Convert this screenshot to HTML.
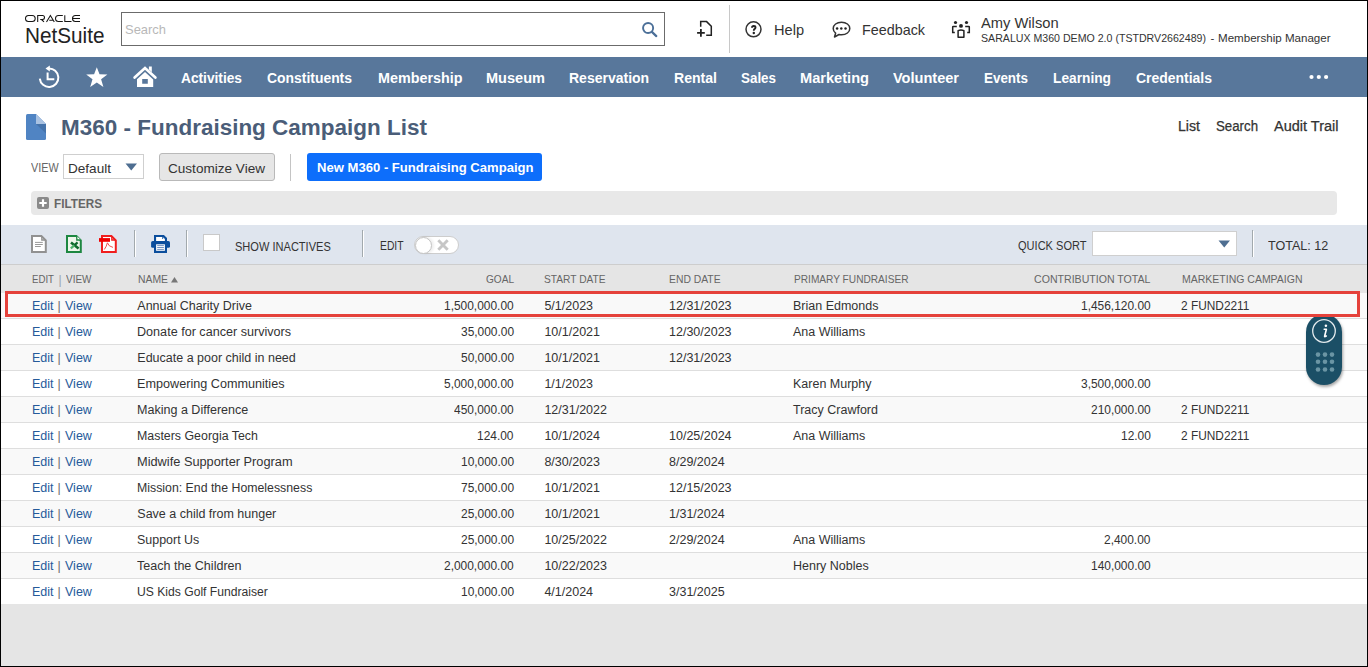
<!DOCTYPE html>
<html><head><meta charset="utf-8">
<style>
*{margin:0;padding:0;box-sizing:border-box}
html,body{width:1368px;height:667px;overflow:hidden;background:#fff}
body{position:relative;font-family:"Liberation Sans",sans-serif}
.t{position:absolute;white-space:pre;line-height:1;font-family:"Liberation Sans",sans-serif}
.b{position:absolute}
svg{position:absolute;overflow:visible}
</style></head><body>
<!-- header -->
<svg style="left:25px;top:15px" width="56" height="8" viewBox="0 0 56 8"><path d="M3.5 0.5 H7.2 A3 3 0 0 1 7.2 6.5 H3.5 A3 3 0 0 1 3.5 0.5 Z M12.7 7 V0.5 H17.5 A2 2 0 0 1 17.5 4.5 H15.2 M16.5 4.5 L19 6.9 M21.5 7 L25.4 0.6 L29.3 7 M24.3 5.3 H28.3 M37.8 0.5 H33.5 A3 3 0 0 0 33.5 6.5 H37.8 M39.8 0.3 V6.5 H46.5 M55 0.5 H50.5 A3 3 0 0 0 50.5 6.5 H55 M48 3.5 H55" fill="none" stroke="#161513" stroke-width="1.05"/></svg>
<div class="b" style="left:121px;top:12px;width:544px;height:34px;border:1px solid #6b6b6b;background:#fff"></div>
<svg style="left:641px;top:23px" width="17" height="15" viewBox="0 0 17 15"><circle cx="7.1" cy="5" r="5.05" fill="none" stroke="#4b6f98" stroke-width="1.9"/><line x1="10.9" y1="8.9" x2="15.3" y2="13.1" stroke="#4b6f98" stroke-width="2.2" stroke-linecap="round"/></svg>
<svg style="left:696px;top:21px" width="17" height="17" viewBox="0 0 17 17"><path d="M4.7 5.8 V0.6 H10.6 L15.3 5.2 V14.3 H10.2" fill="none" stroke="#222" stroke-width="1.5" stroke-linejoin="miter"/><path d="M1.1 11.8 H8.8 M4.9 8.1 V15.7" stroke="#222" stroke-width="1.8"/></svg>
<div class="b" style="left:729px;top:5px;width:1px;height:48px;background:#c8c8c8"></div>
<svg style="left:745px;top:21px" width="18" height="17" viewBox="0 0 18 17"><circle cx="8.5" cy="8.3" r="7.5" fill="none" stroke="#333" stroke-width="1.5"/><path d="M7 6.7 Q7 5 8.8 5 Q10.5 5 10.5 6.5 Q10.5 7.5 9.5 8.1 Q8.8 8.6 8.8 9.7" fill="none" stroke="#222" stroke-width="1.9"/><circle cx="8.8" cy="12" r="1.2" fill="#222"/></svg>
<svg style="left:832px;top:21px" width="19" height="17" viewBox="0 0 19 17"><path d="M9.5 1.2 C14.3 1.2 17.8 3.9 17.8 7.5 C17.8 11.1 14.3 13.8 9.5 13.8 C8.6 13.8 7.8 13.7 7 13.5 L2.5 16 L3.6 12.2 C2 11 1.2 9.4 1.2 7.5 C1.2 3.9 4.7 1.2 9.5 1.2 Z" fill="none" stroke="#333" stroke-width="1.5" stroke-linejoin="round"/><circle cx="5.1" cy="7.6" r="1.25" fill="#222"/><circle cx="9.3" cy="7.6" r="1.25" fill="#222"/><circle cx="13.5" cy="7.6" r="1.25" fill="#222"/></svg>
<svg style="left:945px;top:15px" width="30" height="27" viewBox="0 0 30 27"><g fill="#222"><circle cx="10.5" cy="7.5" r="1.6"/><circle cx="21.5" cy="7.5" r="1.6"/><circle cx="16" cy="10.9" r="1.95"/></g><path d="M11.8 11.6 H8.2 Q7.7 11.6 7.7 12.1 V17.4 H9.8 M20.2 11.6 H23.8 Q24.3 11.6 24.3 12.1 V17.4 H22.2" fill="none" stroke="#222" stroke-width="1.5"/><path d="M13.1 22.2 V15.6 Q16 14.3 18.9 15.6 V22.2 Z" fill="none" stroke="#222" stroke-width="1.5" stroke-linejoin="round"/></svg>

<!-- nav -->
<div class="b" style="left:0;top:57px;width:1368px;height:40px;background:#58779b"></div>
<svg style="left:38px;top:66px" width="22" height="22" viewBox="0 0 22 22"><path d="M1.8 12.6 A9.3 9.3 0 1 0 10.6 2.4" fill="none" stroke="#fff" stroke-width="2"/><path d="M7.5 2.5 L11.8 -0.4 L11.8 5.4 Z" fill="#fff"/><path d="M9.6 6.5 V13.3 H16.3" fill="none" stroke="#fff" stroke-width="2"/></svg>
<svg style="left:86px;top:67px" width="22" height="21" viewBox="0 0 22 21"><path d="M10.8 0.2 L13.5 7.2 L21.4 7.4 L15.1 12.3 L17.4 20 L10.8 15.4 L4.2 20 L6.5 12.3 L0.2 7.4 L8.1 7.2 Z" fill="#fff"/></svg>
<svg style="left:128px;top:62px" width="34" height="30" viewBox="0 0 34 30"><path d="M6.6 15.6 L17 6 L27.4 15.6" fill="none" stroke="#fff" stroke-width="2.7" stroke-linecap="round"/><path d="M20.9 4.5 H23.8 V10.2 L20.9 7.4 Z" fill="#fff"/><path d="M9 25 V17.3 L17 10.1 L25.2 17.5 V25 Z M14.2 16.9 V21.8 H19.8 V16.9 Z" fill="#fff" fill-rule="evenodd"/></svg>
<svg style="left:1309px;top:74px" width="20" height="6" viewBox="0 0 20 6"><circle cx="2.5" cy="3" r="2.1" fill="#fff"/><circle cx="9.8" cy="3" r="2.1" fill="#fff"/><circle cx="17.1" cy="3" r="2.1" fill="#fff"/></svg>

<!-- title area -->
<svg style="left:26px;top:114px" width="20" height="26" viewBox="0 0 20 26"><path d="M1.5 0 H10 L20 10 V24.5 Q20 26 18.5 26 H1.5 Q0 26 0 24.5 V1.5 Q0 0 1.5 0 Z" fill="#5084c3"/><path d="M10 0 L20 10 H10 Z" fill="#a9c2e2"/><path d="M10 10 H20 V19.5 Z" fill="#4573ab"/></svg>

<div class="b" style="left:63px;top:154px;width:81px;height:25px;border:1px solid #cfcfcf;background:#fff"></div>
<svg style="left:125px;top:163px" width="13" height="8" viewBox="0 0 13 8"><path d="M0.5 0.5 H12 L6.25 7.5 Z" fill="#4e6e91"/></svg>
<div class="b" style="left:159px;top:153px;width:116px;height:28px;border:1px solid #b9b9b9;border-radius:3px;background:#e6e6e6"></div>
<div class="b" style="left:290px;top:154px;width:1px;height:27px;background:#c4c4c4"></div>
<div class="b" style="left:307px;top:153px;width:235px;height:28px;border-radius:3px;background:#0d6efb"></div>

<div class="b" style="left:31px;top:191px;width:1306px;height:24px;border-radius:4px;background:#e8e8e8"></div>
<svg style="left:37px;top:197px" width="12" height="12" viewBox="0 0 12 12"><rect x="0" y="0" width="12" height="12" rx="2" fill="#8a8a8a"/><path d="M6 2.3 V9.7 M2.3 6 H9.7" stroke="#fff" stroke-width="2.2"/></svg>

<!-- toolbar -->
<div class="b" style="left:1px;top:225px;width:1366px;height:40px;background:#dfe5ee;border-bottom:1px solid #cdcdcd"></div>
<svg style="left:28px;top:230px" width="92" height="28" viewBox="0 0 92 28">
<path d="M4 6 H13.4 L17.8 10.4 V21.9 H4 Z" fill="#fff" stroke="#919191" stroke-width="2"/><path d="M13.8 6 V10 H17.8" fill="none" stroke="#919191" stroke-width="1.3"/><path d="M7 12.4 H14.8 M7 14.5 H14.8 M7 16.5 H12.8" stroke="#9a9a9a" stroke-width="1"/>
<path d="M39 6 H48.4 L52.8 10.4 V21.9 H39 Z" fill="#eef6ea" stroke="#1d8741" stroke-width="2"/><path d="M48.8 6 V10 H52.8" fill="#fff" stroke="#1d8741" stroke-width="1.3"/><path d="M43 12.4 L50.6 18.4" stroke="#0f6a2c" stroke-width="2.6"/><path d="M49.6 12.4 L46.3 15.4" stroke="#0f6a2c" stroke-width="2.2"/><path d="M46.3 15.4 L42.8 18.4" stroke="#4fb26b" stroke-width="2.2"/>
<path d="M74 6 H83.4 L87.8 10.4 V21.9 H74 Z" fill="#fff" stroke="#f01e1e" stroke-width="2"/><path d="M83.8 6 V10 H87.8" fill="none" stroke="#f01e1e" stroke-width="1.3"/><rect x="71" y="8.1" width="11" height="3.7" fill="#f00000"/><path d="M76.3 19.5 Q78.5 16.5 79.4 12.8 Q80.5 16.5 85 17.4" fill="none" stroke="#f03a3a" stroke-width="0.9"/>
</svg>
<div class="b" style="left:134px;top:230px;width:1px;height:27px;background:#a2a9ad"></div><div class="b" style="left:135px;top:231px;width:1px;height:26px;background:#fff"></div>
<svg style="left:145px;top:230px" width="32" height="28" viewBox="0 0 32 28"><path d="M9 22.9 V5 H18.9 L22 8.1 V22.9 Z" fill="#0b4e9d"/><rect x="6.1" y="11.1" width="18.9" height="6.7" rx="1.6" fill="#0b4e9d"/><path d="M11.1 6.9 H17.3 V9.1 H19.9 V11.1 H11.1 Z" fill="#fff"/><path d="M18.1 7.2 L19.9 9 H18.1 Z" fill="#fff"/><rect x="11.1" y="14.3" width="8.8" height="6.5" fill="#fff"/><path d="M12.2 15.6 H18.9 M12.2 17.5 H18.9 M12.2 19.4 H18.9" stroke="#5f86bb" stroke-width="0.9"/></svg>
<div class="b" style="left:186px;top:230px;width:1px;height:27px;background:#a2a9ad"></div><div class="b" style="left:187px;top:231px;width:1px;height:26px;background:#fff"></div>
<div class="b" style="left:203px;top:234px;width:17px;height:17px;border:1px solid #c9c9c9;background:#fff"></div>
<div class="b" style="left:362px;top:230px;width:1px;height:27px;background:#a2a9ad"></div><div class="b" style="left:363px;top:231px;width:1px;height:26px;background:#fff"></div>
<div class="b" style="left:414px;top:236px;width:45px;height:18px;border:1px solid #cdcdcd;border-radius:9px;background:#fff"></div>
<div class="b" style="left:414.5px;top:236.5px;width:17px;height:17px;border:1px solid #c4c4c4;border-radius:50%;background:#fff;box-shadow:2px 0 3px rgba(0,0,0,.08)"></div>
<svg style="left:436px;top:238px" width="14" height="14" viewBox="0 0 14 14"><path d="M2.3 2.3 L11.7 11.7 M11.7 2.3 L2.3 11.7" stroke="#c6c6c6" stroke-width="2.9"/></svg>
<div class="b" style="left:1092px;top:231px;width:145px;height:25px;border:1px solid #cfcfcf;background:#fff"></div>
<svg style="left:1218px;top:240px" width="13" height="8" viewBox="0 0 13 8"><path d="M0.5 0.5 H12 L6.25 7.5 Z" fill="#4e6e91"/></svg>
<div class="b" style="left:1252px;top:230px;width:1px;height:27px;background:#a2a9ad"></div><div class="b" style="left:1253px;top:231px;width:1px;height:26px;background:#fff"></div>

<!-- table -->
<div class="b" style="left:1px;top:265px;width:1366px;height:28px;background:#e5e5e5"></div>

<div class="b" style="left:1px;top:293px;width:1366px;height:26px;background:#f9f9f9;border-bottom:1px solid #dedede"></div>
<div class="b" style="left:1px;top:319px;width:1366px;height:26px;background:#ffffff;border-bottom:1px solid #dedede"></div>
<div class="b" style="left:1px;top:345px;width:1366px;height:26px;background:#f9f9f9;border-bottom:1px solid #dedede"></div>
<div class="b" style="left:1px;top:371px;width:1366px;height:26px;background:#ffffff;border-bottom:1px solid #dedede"></div>
<div class="b" style="left:1px;top:397px;width:1366px;height:26px;background:#f9f9f9;border-bottom:1px solid #dedede"></div>
<div class="b" style="left:1px;top:423px;width:1366px;height:26px;background:#ffffff;border-bottom:1px solid #dedede"></div>
<div class="b" style="left:1px;top:449px;width:1366px;height:26px;background:#f9f9f9;border-bottom:1px solid #dedede"></div>
<div class="b" style="left:1px;top:475px;width:1366px;height:26px;background:#ffffff;border-bottom:1px solid #dedede"></div>
<div class="b" style="left:1px;top:501px;width:1366px;height:26px;background:#f9f9f9;border-bottom:1px solid #dedede"></div>
<div class="b" style="left:1px;top:527px;width:1366px;height:26px;background:#ffffff;border-bottom:1px solid #dedede"></div>
<div class="b" style="left:1px;top:553px;width:1366px;height:26px;background:#f9f9f9;border-bottom:1px solid #dedede"></div>
<div class="b" style="left:1px;top:579px;width:1366px;height:26px;background:#ffffff;border-bottom:1px solid #dedede"></div>
<div class="b" style="left:1px;top:604px;width:1366px;height:62px;background:#e5e5e5"></div>
<svg style="left:171px;top:277px" width="7" height="6" viewBox="0 0 7 6"><path d="M0 5.5 L3.5 0 L7 5.5 Z" fill="#777"/></svg>

<!-- info widget -->
<div class="b" style="left:1306px;top:314px;width:36px;height:71px;border-radius:18px;background:#1b4f66;box-shadow:1px 2px 3px rgba(0,0,0,.35)"></div>
<svg style="left:1306px;top:313px" width="36" height="72" viewBox="0 0 36 72"><circle cx="18" cy="18" r="11.3" fill="none" stroke="#e3eaed" stroke-width="1.3"/><circle cx="19.9" cy="12.7" r="1.25" fill="#fff"/><path d="M18.2 16.2 H20.4 L18.6 23.2 Q18.5 23.9 19.2 23.6 L20.3 23" fill="none" stroke="#fff" stroke-width="1.6" stroke-linejoin="round" stroke-linecap="round"/><g fill="#6b95a4"><circle cx="12" cy="41.6" r="2.3"/><circle cx="19" cy="41.6" r="2.3"/><circle cx="26" cy="41.6" r="2.3"/><circle cx="12" cy="48.8" r="2.3"/><circle cx="19" cy="48.8" r="2.3"/><circle cx="26" cy="48.8" r="2.3"/><circle cx="12" cy="56.5" r="2.3"/><circle cx="19" cy="56.5" r="2.3"/><circle cx="26" cy="56.5" r="2.3"/></g></svg>

<span class="t" style="left:25.00px;top:24.64px;font-size:22.4px;color:#222;transform:scaleX(0.9256);transform-origin:0 0;">NetSuite</span>
<span class="t" style="left:125.00px;top:23.07px;font-size:13.5px;color:#b8b8b8;transform:scaleX(0.9584);transform-origin:0 0;">Search</span>
<span class="t" style="left:774.00px;top:22.10px;font-size:15px;color:#333;transform:scaleX(0.9722);transform-origin:0 0;">Help</span>
<span class="t" style="left:861.60px;top:22.10px;font-size:15px;color:#333;transform:scaleX(0.9564);transform-origin:0 0;">Feedback</span>
<span class="t" style="left:981.30px;top:14.80px;font-size:15px;color:#333;transform:scaleX(0.9800);transform-origin:0 0;">Amy Wilson</span>
<span class="t" style="left:981.30px;top:33.47px;font-size:11.5px;color:#333;transform:scaleX(0.9223);transform-origin:0 0;">SARALUX M360 DEMO 2.0 (TSTDRV2662489)</span>
<span class="t" style="left:1210.60px;top:33.47px;font-size:11.5px;color:#333;">-</span>
<span class="t" style="left:1218.00px;top:33.47px;font-size:11.5px;color:#333;transform:scaleX(1.0066);transform-origin:0 0;">Membership Manager</span>
<span class="t" style="left:181.40px;top:71.15px;font-size:14px;color:#fff;font-weight:bold;transform:scaleX(0.9799);transform-origin:0 0;">Activities</span>
<span class="t" style="left:267.00px;top:71.15px;font-size:14px;color:#fff;font-weight:bold;transform:scaleX(0.9934);transform-origin:0 0;">Constituents</span>
<span class="t" style="left:377.70px;top:71.15px;font-size:14px;color:#fff;font-weight:bold;transform:scaleX(1.0246);transform-origin:0 0;">Membership</span>
<span class="t" style="left:486.00px;top:71.15px;font-size:14px;color:#fff;font-weight:bold;transform:scaleX(1.0388);transform-origin:0 0;">Museum</span>
<span class="t" style="left:569.00px;top:71.15px;font-size:14px;color:#fff;font-weight:bold;">Reservation</span>
<span class="t" style="left:674.00px;top:71.15px;font-size:14px;color:#fff;font-weight:bold;transform:scaleX(1.0047);transform-origin:0 0;">Rental</span>
<span class="t" style="left:741.00px;top:71.15px;font-size:14px;color:#fff;font-weight:bold;transform:scaleX(0.9564);transform-origin:0 0;">Sales</span>
<span class="t" style="left:800.00px;top:71.15px;font-size:14px;color:#fff;font-weight:bold;transform:scaleX(1.0435);transform-origin:0 0;">Marketing</span>
<span class="t" style="left:893.00px;top:71.15px;font-size:14px;color:#fff;font-weight:bold;transform:scaleX(1.0389);transform-origin:0 0;">Volunteer</span>
<span class="t" style="left:984.00px;top:71.15px;font-size:14px;color:#fff;font-weight:bold;transform:scaleX(0.9581);transform-origin:0 0;">Events</span>
<span class="t" style="left:1053.00px;top:71.15px;font-size:14px;color:#fff;font-weight:bold;transform:scaleX(0.9810);transform-origin:0 0;">Learning</span>
<span class="t" style="left:1136.00px;top:71.15px;font-size:14px;color:#fff;font-weight:bold;transform:scaleX(0.9967);transform-origin:0 0;">Credentials</span>
<span class="t" style="left:60.80px;top:116.83px;font-size:21.7px;color:#4a5d78;font-weight:bold;transform:scaleX(1.0366);transform-origin:0 0;">M360 - Fundraising Campaign List</span>
<span class="t" style="left:1177.50px;top:119.15px;font-size:14px;color:#333;transform:scaleX(1.0093);transform-origin:0 0;-webkit-text-stroke:0.25px #333;">List</span>
<span class="t" style="left:1215.50px;top:119.15px;font-size:14px;color:#333;transform:scaleX(0.9468);transform-origin:0 0;-webkit-text-stroke:0.25px #333;">Search</span>
<span class="t" style="left:1274.00px;top:119.15px;font-size:14px;color:#333;transform:scaleX(1.0361);transform-origin:0 0;-webkit-text-stroke:0.25px #333;">Audit Trail</span>
<span class="t" style="left:31.30px;top:161.64px;font-size:12px;color:#666;transform:scaleX(0.8998);transform-origin:0 0;">VIEW</span>
<span class="t" style="left:68.00px;top:161.50px;font-size:13px;color:#333;transform:scaleX(1.0436);transform-origin:0 0;">Default</span>
<span class="t" style="left:168.40px;top:161.50px;font-size:13px;color:#333;transform:scaleX(1.0434);transform-origin:0 0;">Customize View</span>
<span class="t" style="left:316.80px;top:161.20px;font-size:13px;color:#fff;font-weight:bold;transform:scaleX(1.0062);transform-origin:0 0;">New M360 - Fundraising Campaign</span>
<span class="t" style="left:54.40px;top:197.64px;font-size:12px;color:#666;font-weight:bold;transform:scaleX(0.9774);transform-origin:0 0;">FILTERS</span>
<span class="t" style="left:235.30px;top:241.22px;font-size:12.5px;color:#333;transform:scaleX(0.8842);transform-origin:0 0;">SHOW INACTIVES</span>
<span class="t" style="left:379.80px;top:240.42px;font-size:12.5px;color:#333;transform:scaleX(0.8250);transform-origin:0 0;">EDIT</span>
<span class="t" style="left:1018.30px;top:240.02px;font-size:12.5px;color:#333;transform:scaleX(0.8832);transform-origin:0 0;">QUICK SORT</span>
<span class="t" style="left:1268.30px;top:240.02px;font-size:12.5px;color:#333;transform:scaleX(1.0053);transform-origin:0 0;">TOTAL: 12</span>
<span class="t" style="left:31.70px;top:273.89px;font-size:11px;color:#666;transform:scaleX(0.8778);transform-origin:0 0;">EDIT</span>
<span class="t" style="left:58.60px;top:273.64px;font-size:12px;color:#9aa3ad;">|</span>
<span class="t" style="left:65.90px;top:273.89px;font-size:11px;color:#666;transform:scaleX(0.9067);transform-origin:0 0;">VIEW</span>
<span class="t" style="left:137.50px;top:273.89px;font-size:11px;color:#666;transform:scaleX(0.9440);transform-origin:0 0;">NAME</span>
<span class="t" style="left:485.60px;top:273.89px;font-size:11px;color:#666;transform:scaleX(0.9157);transform-origin:0 0;">GOAL</span>
<span class="t" style="left:544.40px;top:273.89px;font-size:11px;color:#666;transform:scaleX(0.9274);transform-origin:0 0;">START DATE</span>
<span class="t" style="left:669.00px;top:273.89px;font-size:11px;color:#666;transform:scaleX(0.9414);transform-origin:0 0;">END DATE</span>
<span class="t" style="left:793.80px;top:273.89px;font-size:11px;color:#666;transform:scaleX(0.9212);transform-origin:0 0;">PRIMARY FUNDRAISER</span>
<span class="t" style="left:1033.80px;top:273.89px;font-size:11px;color:#666;transform:scaleX(0.9627);transform-origin:0 0;">CONTRIBUTION TOTAL</span>
<span class="t" style="left:1181.50px;top:273.89px;font-size:11px;color:#666;transform:scaleX(0.9540);transform-origin:0 0;">MARKETING CAMPAIGN</span>
<span class="t" style="left:32.00px;top:300.22px;font-size:12.5px;color:#255a9a;">Edit</span>
<span class="t" style="left:57.50px;top:300.22px;font-size:12.5px;color:#6b6b6b;">|</span>
<span class="t" style="left:65.00px;top:300.22px;font-size:12.5px;color:#255a9a;">View</span>
<span class="t" style="left:137.30px;top:300.22px;font-size:12.5px;color:#333;">Annual Charity Drive</span>
<span class="t" style="left:444.28px;top:300.22px;font-size:12.5px;color:#333;transform:scaleX(0.9550);transform-origin:0 0;">1,500,000.00</span>
<span class="t" style="left:544.40px;top:300.22px;font-size:12.5px;color:#333;">5/1/2023</span>
<span class="t" style="left:669.00px;top:300.22px;font-size:12.5px;color:#333;">12/31/2023</span>
<span class="t" style="left:793.00px;top:300.22px;font-size:12.5px;color:#333;">Brian Edmonds</span>
<span class="t" style="left:1080.79px;top:300.22px;font-size:12.5px;color:#333;transform:scaleX(0.9550);transform-origin:0 0;">1,456,120.00</span>
<span class="t" style="left:1181.00px;top:300.22px;font-size:12.5px;color:#333;transform:scaleX(0.9500);transform-origin:0 0;">2 FUND2211</span>
<span class="t" style="left:32.00px;top:326.22px;font-size:12.5px;color:#255a9a;">Edit</span>
<span class="t" style="left:57.50px;top:326.22px;font-size:12.5px;color:#6b6b6b;">|</span>
<span class="t" style="left:65.00px;top:326.22px;font-size:12.5px;color:#255a9a;">View</span>
<span class="t" style="left:137.30px;top:326.22px;font-size:12.5px;color:#333;transform:scaleX(1.0082);transform-origin:0 0;">Donate for cancer survivors</span>
<span class="t" style="left:460.89px;top:326.22px;font-size:12.5px;color:#333;transform:scaleX(0.9550);transform-origin:0 0;">35,000.00</span>
<span class="t" style="left:544.40px;top:326.22px;font-size:12.5px;color:#333;">10/1/2021</span>
<span class="t" style="left:669.00px;top:326.22px;font-size:12.5px;color:#333;">12/30/2023</span>
<span class="t" style="left:793.00px;top:326.22px;font-size:12.5px;color:#333;">Ana Williams</span>
<span class="t" style="left:32.00px;top:352.22px;font-size:12.5px;color:#255a9a;">Edit</span>
<span class="t" style="left:57.50px;top:352.22px;font-size:12.5px;color:#6b6b6b;">|</span>
<span class="t" style="left:65.00px;top:352.22px;font-size:12.5px;color:#255a9a;">View</span>
<span class="t" style="left:137.30px;top:352.22px;font-size:12.5px;color:#333;">Educate a poor child in need</span>
<span class="t" style="left:460.89px;top:352.22px;font-size:12.5px;color:#333;transform:scaleX(0.9550);transform-origin:0 0;">50,000.00</span>
<span class="t" style="left:544.40px;top:352.22px;font-size:12.5px;color:#333;">10/1/2021</span>
<span class="t" style="left:669.00px;top:352.22px;font-size:12.5px;color:#333;">12/31/2023</span>
<span class="t" style="left:32.00px;top:378.22px;font-size:12.5px;color:#255a9a;">Edit</span>
<span class="t" style="left:57.50px;top:378.22px;font-size:12.5px;color:#6b6b6b;">|</span>
<span class="t" style="left:65.00px;top:378.22px;font-size:12.5px;color:#255a9a;">View</span>
<span class="t" style="left:137.30px;top:378.22px;font-size:12.5px;color:#333;transform:scaleX(1.0110);transform-origin:0 0;">Empowering Communities</span>
<span class="t" style="left:444.28px;top:378.22px;font-size:12.5px;color:#333;transform:scaleX(0.9550);transform-origin:0 0;">5,000,000.00</span>
<span class="t" style="left:544.40px;top:378.22px;font-size:12.5px;color:#333;">1/1/2023</span>
<span class="t" style="left:793.00px;top:378.22px;font-size:12.5px;color:#333;">Karen Murphy</span>
<span class="t" style="left:1080.79px;top:378.22px;font-size:12.5px;color:#333;transform:scaleX(0.9550);transform-origin:0 0;">3,500,000.00</span>
<span class="t" style="left:32.00px;top:404.22px;font-size:12.5px;color:#255a9a;">Edit</span>
<span class="t" style="left:57.50px;top:404.22px;font-size:12.5px;color:#6b6b6b;">|</span>
<span class="t" style="left:65.00px;top:404.22px;font-size:12.5px;color:#255a9a;">View</span>
<span class="t" style="left:137.30px;top:404.22px;font-size:12.5px;color:#333;transform:scaleX(1.0033);transform-origin:0 0;">Making a Difference</span>
<span class="t" style="left:454.25px;top:404.22px;font-size:12.5px;color:#333;transform:scaleX(0.9550);transform-origin:0 0;">450,000.00</span>
<span class="t" style="left:544.40px;top:404.22px;font-size:12.5px;color:#333;">12/31/2022</span>
<span class="t" style="left:793.00px;top:404.22px;font-size:12.5px;color:#333;">Tracy Crawford</span>
<span class="t" style="left:1090.75px;top:404.22px;font-size:12.5px;color:#333;transform:scaleX(0.9550);transform-origin:0 0;">210,000.00</span>
<span class="t" style="left:1181.00px;top:404.22px;font-size:12.5px;color:#333;transform:scaleX(0.9500);transform-origin:0 0;">2 FUND2211</span>
<span class="t" style="left:32.00px;top:430.22px;font-size:12.5px;color:#255a9a;">Edit</span>
<span class="t" style="left:57.50px;top:430.22px;font-size:12.5px;color:#6b6b6b;">|</span>
<span class="t" style="left:65.00px;top:430.22px;font-size:12.5px;color:#255a9a;">View</span>
<span class="t" style="left:137.30px;top:430.22px;font-size:12.5px;color:#333;transform:scaleX(0.9906);transform-origin:0 0;">Masters Georgia Tech</span>
<span class="t" style="left:477.49px;top:430.22px;font-size:12.5px;color:#333;transform:scaleX(0.9550);transform-origin:0 0;">124.00</span>
<span class="t" style="left:544.40px;top:430.22px;font-size:12.5px;color:#333;">10/1/2024</span>
<span class="t" style="left:669.00px;top:430.22px;font-size:12.5px;color:#333;">10/25/2024</span>
<span class="t" style="left:793.00px;top:430.22px;font-size:12.5px;color:#333;">Ana Williams</span>
<span class="t" style="left:1120.63px;top:430.22px;font-size:12.5px;color:#333;transform:scaleX(0.9550);transform-origin:0 0;">12.00</span>
<span class="t" style="left:1181.00px;top:430.22px;font-size:12.5px;color:#333;transform:scaleX(0.9500);transform-origin:0 0;">2 FUND2211</span>
<span class="t" style="left:32.00px;top:456.22px;font-size:12.5px;color:#255a9a;">Edit</span>
<span class="t" style="left:57.50px;top:456.22px;font-size:12.5px;color:#6b6b6b;">|</span>
<span class="t" style="left:65.00px;top:456.22px;font-size:12.5px;color:#255a9a;">View</span>
<span class="t" style="left:137.30px;top:456.22px;font-size:12.5px;color:#333;transform:scaleX(1.0226);transform-origin:0 0;">Midwife Supporter Program</span>
<span class="t" style="left:460.89px;top:456.22px;font-size:12.5px;color:#333;transform:scaleX(0.9550);transform-origin:0 0;">10,000.00</span>
<span class="t" style="left:544.40px;top:456.22px;font-size:12.5px;color:#333;">8/30/2023</span>
<span class="t" style="left:669.00px;top:456.22px;font-size:12.5px;color:#333;">8/29/2024</span>
<span class="t" style="left:32.00px;top:482.22px;font-size:12.5px;color:#255a9a;">Edit</span>
<span class="t" style="left:57.50px;top:482.22px;font-size:12.5px;color:#6b6b6b;">|</span>
<span class="t" style="left:65.00px;top:482.22px;font-size:12.5px;color:#255a9a;">View</span>
<span class="t" style="left:137.30px;top:482.22px;font-size:12.5px;color:#333;transform:scaleX(0.9856);transform-origin:0 0;">Mission: End the Homelessness</span>
<span class="t" style="left:460.89px;top:482.22px;font-size:12.5px;color:#333;transform:scaleX(0.9550);transform-origin:0 0;">75,000.00</span>
<span class="t" style="left:544.40px;top:482.22px;font-size:12.5px;color:#333;">10/1/2021</span>
<span class="t" style="left:669.00px;top:482.22px;font-size:12.5px;color:#333;">12/15/2023</span>
<span class="t" style="left:32.00px;top:508.22px;font-size:12.5px;color:#255a9a;">Edit</span>
<span class="t" style="left:57.50px;top:508.22px;font-size:12.5px;color:#6b6b6b;">|</span>
<span class="t" style="left:65.00px;top:508.22px;font-size:12.5px;color:#255a9a;">View</span>
<span class="t" style="left:137.30px;top:508.22px;font-size:12.5px;color:#333;">Save a child from hunger</span>
<span class="t" style="left:460.89px;top:508.22px;font-size:12.5px;color:#333;transform:scaleX(0.9550);transform-origin:0 0;">25,000.00</span>
<span class="t" style="left:544.40px;top:508.22px;font-size:12.5px;color:#333;">10/1/2021</span>
<span class="t" style="left:669.00px;top:508.22px;font-size:12.5px;color:#333;">1/31/2024</span>
<span class="t" style="left:32.00px;top:534.22px;font-size:12.5px;color:#255a9a;">Edit</span>
<span class="t" style="left:57.50px;top:534.22px;font-size:12.5px;color:#6b6b6b;">|</span>
<span class="t" style="left:65.00px;top:534.22px;font-size:12.5px;color:#255a9a;">View</span>
<span class="t" style="left:137.30px;top:534.22px;font-size:12.5px;color:#333;transform:scaleX(0.9963);transform-origin:0 0;">Support Us</span>
<span class="t" style="left:460.89px;top:534.22px;font-size:12.5px;color:#333;transform:scaleX(0.9550);transform-origin:0 0;">25,000.00</span>
<span class="t" style="left:544.40px;top:534.22px;font-size:12.5px;color:#333;">10/25/2022</span>
<span class="t" style="left:669.00px;top:534.22px;font-size:12.5px;color:#333;">2/29/2024</span>
<span class="t" style="left:793.00px;top:534.22px;font-size:12.5px;color:#333;">Ana Williams</span>
<span class="t" style="left:1104.02px;top:534.22px;font-size:12.5px;color:#333;transform:scaleX(0.9550);transform-origin:0 0;">2,400.00</span>
<span class="t" style="left:32.00px;top:560.22px;font-size:12.5px;color:#255a9a;">Edit</span>
<span class="t" style="left:57.50px;top:560.22px;font-size:12.5px;color:#6b6b6b;">|</span>
<span class="t" style="left:65.00px;top:560.22px;font-size:12.5px;color:#255a9a;">View</span>
<span class="t" style="left:137.30px;top:560.22px;font-size:12.5px;color:#333;transform:scaleX(1.0025);transform-origin:0 0;">Teach the Children</span>
<span class="t" style="left:444.28px;top:560.22px;font-size:12.5px;color:#333;transform:scaleX(0.9550);transform-origin:0 0;">2,000,000.00</span>
<span class="t" style="left:544.40px;top:560.22px;font-size:12.5px;color:#333;">10/22/2023</span>
<span class="t" style="left:793.00px;top:560.22px;font-size:12.5px;color:#333;">Henry Nobles</span>
<span class="t" style="left:1090.75px;top:560.22px;font-size:12.5px;color:#333;transform:scaleX(0.9550);transform-origin:0 0;">140,000.00</span>
<span class="t" style="left:32.00px;top:586.22px;font-size:12.5px;color:#255a9a;">Edit</span>
<span class="t" style="left:57.50px;top:586.22px;font-size:12.5px;color:#6b6b6b;">|</span>
<span class="t" style="left:65.00px;top:586.22px;font-size:12.5px;color:#255a9a;">View</span>
<span class="t" style="left:137.30px;top:586.22px;font-size:12.5px;color:#333;transform:scaleX(0.9712);transform-origin:0 0;">US Kids Golf Fundraiser</span>
<span class="t" style="left:460.89px;top:586.22px;font-size:12.5px;color:#333;transform:scaleX(0.9550);transform-origin:0 0;">10,000.00</span>
<span class="t" style="left:544.40px;top:586.22px;font-size:12.5px;color:#333;">4/1/2024</span>
<span class="t" style="left:669.00px;top:586.22px;font-size:12.5px;color:#333;">3/31/2025</span>

<!-- red highlight -->
<div class="b" style="left:5px;top:291px;width:1355px;height:26px;border:3px solid #e5423b"></div>
<!-- frame -->
<div class="b" style="left:0;top:0;width:1368px;height:667px;border:1px solid #000;pointer-events:none"></div>
</body></html>
